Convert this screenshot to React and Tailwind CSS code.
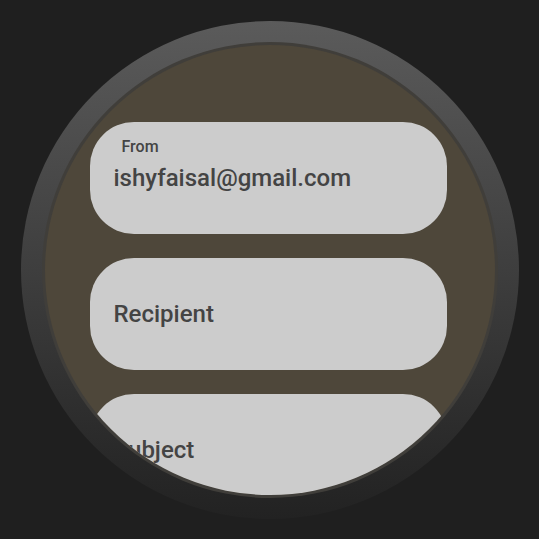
export default function App() {
  const fields = ["Recipient", "Subject"];
  return (
    <div
      className="flex h-[539px] w-[539px] items-center justify-center bg-[#1f1f1f]"
      style={{ fontFamily: "Roboto, 'Noto Sans', sans-serif" }}
    >
      {/* watch bezel */}
      <div className="h-[498px] w-[498px] rounded-full bg-gradient-to-b from-[#5b5b5b] via-[#3e3e3e] to-[#222222] p-[21px]">
        <div className="h-full w-full overflow-hidden rounded-full border-[3px] border-[#3a3a3a]/70 bg-[#4e473a]">
          <div className="flex flex-col gap-[24px] pl-[45px] pr-[48px] pt-[77px]">
            <div className="h-[112px] shrink-0 rounded-[44px] bg-[#cccccc] px-[24px] pt-[15px] text-[#444444]">
              <p className="pl-[8px] text-[16px] font-medium leading-[20px]">From</p>
              <p className="mt-[7px] text-[24px] font-medium leading-[28px]">ishyfaisal@gmail.com</p>
            </div>
            {fields.map((f) => (
              <div
                key={f}
                className="flex h-[112px] shrink-0 items-center rounded-[44px] bg-[#cccccc] px-[24px] text-[24px] font-medium leading-[28px] text-[#444444]"
              >
                {f}
              </div>
            ))}
          </div>
        </div>
      </div>
    </div>
  );
}
